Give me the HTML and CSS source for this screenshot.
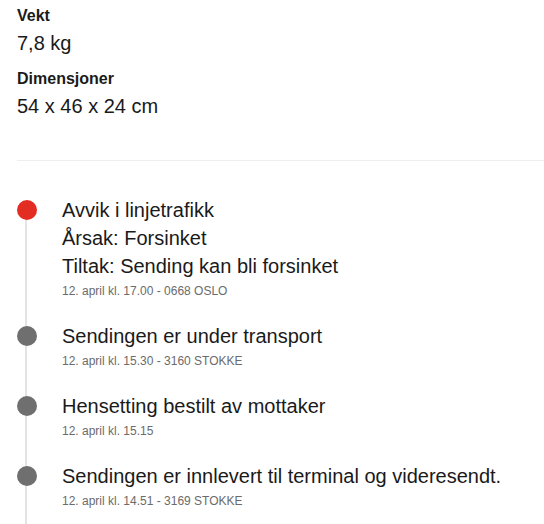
FILE: index.html
```html
<!DOCTYPE html>
<html lang="no">
<head>
    <meta charset="UTF-8">
    <meta name="viewport" content="width=device-width, initial-scale=1.0">
    <title>Sporing</title>
    <link rel="stylesheet" href="styles.css">
</head>
<body>

    <div class="shipment">

        <dl class="specs">
            <dt>Vekt</dt>
            <dd>7,8 kg</dd>
            <dt>Dimensjoner</dt>
            <dd>54 x 46 x 24 cm</dd>
        </dl>

        <hr class="divider">

        <ol class="timeline">
            <li class="event event-alert">
                <span class="dot"></span>
                <div class="event-body">
                    <div class="event-title">Avvik i linjetrafikk</div>
                    <div class="event-title">Årsak: Forsinket</div>
                    <div class="event-title">Tiltak: Sending kan bli forsinket</div>
                    <div class="event-meta">12. april kl. 17.00 - 0668 OSLO</div>
                </div>
            </li>
            <li class="event">
                <span class="dot"></span>
                <div class="event-body">
                    <div class="event-title">Sendingen er under transport</div>
                    <div class="event-meta">12. april kl. 15.30 - 3160 STOKKE</div>
                </div>
            </li>
            <li class="event">
                <span class="dot"></span>
                <div class="event-body">
                    <div class="event-title">Hensetting bestilt av mottaker</div>
                    <div class="event-meta">12. april kl. 15.15</div>
                </div>
            </li>
            <li class="event">
                <span class="dot"></span>
                <div class="event-body">
                    <div class="event-title">Sendingen er innlevert til terminal og videresendt.</div>
                    <div class="event-meta">12. april kl. 14.51 - 3169 STOKKE</div>
                </div>
            </li>
        </ol>

    </div>

</body>
</html>
```

FILE: styles.css
```css
:root{
    --font-primary: "Liberation Sans", Arial, sans-serif;
    --text: #1a1a1a;
    --muted: #6b6b6b;
    --line: #e4e4e4;
    --alert: #e32d22;
    --dot: #6f6f6f;
}

body{
    margin: 0;
    font-family: var(--font-primary);
    color: var(--text);
    background: #fff;
}

.shipment{
    padding: 6px 0 0 17px;
}

/* weight + dimensions */
.specs{
    margin: 0;
}

.specs dt{
    font-size: 16px;
    line-height: 20px;
    font-weight: bold;
}

.specs dd{
    margin: 3px 0 12px 0;
    font-size: 20px;
    line-height: 28px;
}

.divider{
    border: 0;
    border-top: 1px solid #efefef;
    margin: 40px 0 0 0;
}

/* tracking events */
.timeline{
    list-style: none;
    margin: 0;
    padding: 35px 0 0 0;
}

.event{
    position: relative;
    display: flex;
    gap: 25px;
    padding-bottom: 22px;
}

.event::before{
    content: "";
    position: absolute;
    left: 8px;
    top: 0;
    bottom: 0;
    width: 2px;
    background: var(--line);
}

.event:first-child::before{
    top: 14px;
}

.dot{
    position: relative;
    flex: none;
    width: 20px;
    height: 20px;
    margin-top: 4px;
    border-radius: 50%;
    background: var(--dot);
}

.event-alert .dot{
    background: var(--alert);
}

.event-title{
    font-size: 20px;
    line-height: 28px;
}

.event-meta{
    margin-top: 2px;
    font-size: 12px;
    line-height: 18px;
    color: var(--muted);
}
```
